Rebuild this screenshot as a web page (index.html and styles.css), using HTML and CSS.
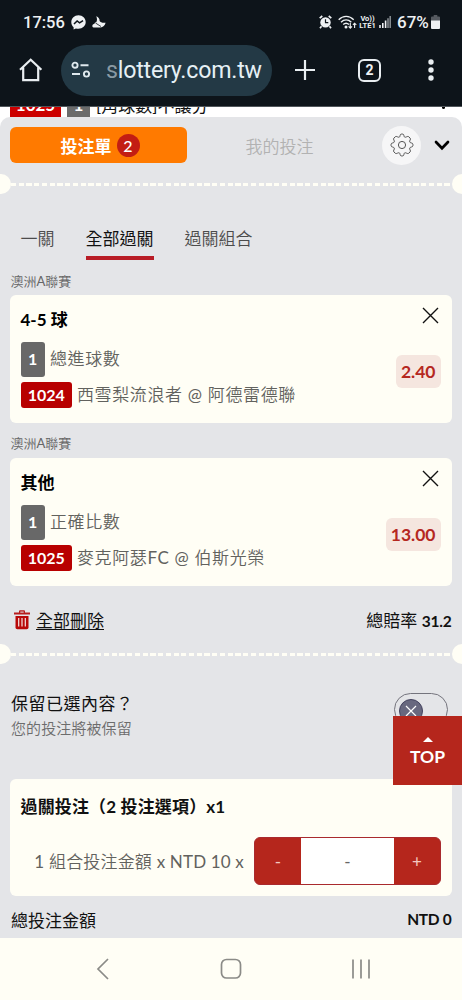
FILE: index.html
```html
<!DOCTYPE html>
<html lang="zh-Hant">
<head>
<meta charset="utf-8">
<meta name="viewport" content="width=device-width, initial-scale=1">
<title>投注單</title>
<link rel="stylesheet" href="styles.css">
</head>
<body>
<div class="phone">
  <header class="browser">
    <div class="status">
      <div class="status-left">
        <span class="clock">17:56</span>
        <svg class="messenger" width="15" height="15" viewBox="0 0 15 15"><path fill="#eef1f3" d="M7.5.3C3.4.3.3 3.3.3 7.2c0 2.1.9 3.8 2.3 5v2.3l2.3-1.1c.8.3 1.7.4 2.6.4 4.1 0 7.2-2.9 7.2-6.7S11.600.3 7.500.3Z"/><path d="m3 9 3.100-3.100 2.500 2L12 5.600" fill="none" stroke="#0d141a" stroke-width="1.500"/></svg>
        <svg class="moon" width="14" height="14" viewBox="0 0 14 14"><path fill="#eef1f3" d="M4.200 1.200c2.400.8 3.600 2.700 3.400 4.800.9 1.600 3 2 6 1.700-.6 3-3 4.800-6 4.800H1.600C.5 12.500.2 11.500.4 10.600c.2-1 1-1.500 1.900-1.500.2-1.200 1-1.800 2-1.800 1-2 .9-4.300-.1-6.100Z"/><path d="m3.500 8 5.500 3.500" stroke="#0d141a" stroke-width=".8"/></svg>
      </div>
      <div class="status-right">
        <svg width="13" height="14" viewBox="0 0 13 14"><circle cx="6.500" cy="7.400" r="5.200" fill="#eef1f3"/><path d="M.7 3.200 3.300 1M12.300 3.200 9.700 1M2.500 11.300 1 13.200M10.500 11.300l1.500 1.900" stroke="#eef1f3" stroke-width="1.700"/><path d="M6.500 4.200v3.400h2.800" stroke="#0d141a" stroke-width="1.200" fill="none"/></svg>
        <svg class="wifi" width="19" height="15" viewBox="0 0 19 15"><g fill="none" stroke="#eef1f3" stroke-width="1.400"><path d="M.7 4.700c4.300-4.500 10.600-4.500 15 0M3 7.200c3-3 7.200-3 10.300 0M5.200 9.600c1.700-1.700 4-1.700 5.800 0"/><path d="M12.300 8v5m-1.700-1.700 1.700 1.800 1.700-1.800M16.600 13V8.300m-1.700 1.600 1.700-1.700 1.700 1.700" stroke-width="1.100"/></g><circle cx="8" cy="12" r="1.500" fill="#eef1f3"/></svg>
        <span class="lte"><span>Vo))</span><span>LTE1</span></span>
        <svg class="signal" width="12" height="12" viewBox="0 0 12 12"><path d="M1 12V9M3.800 12V7M6.600 12V4.500" stroke="#eef1f3" stroke-width="1.600"/><path d="M9 12V2.200M11.200 12V0" stroke="#8b9196" stroke-width="1.500"/></svg>
        <span class="pct">67%</span>
        <svg width="9" height="14" viewBox="0 0 9 14"><path d="M2.700 0h3.600v1.500H8A1 1 0 0 1 9 2.500V6H0V2.500a1 1 0 0 1 1-1h1.700Z" fill="#555a60"/><path d="M0 5.500h9V13a1 1 0 0 1-1 1H1a1 1 0 0 1-1-1Z" fill="#eef1f3"/></svg>
      </div>
    </div>
    <div class="toolbar">
      <svg class="home" width="24" height="24" viewBox="0 0 24 24"><path d="M1 11.700 11.700 1.700 22.400 11.700M4.200 9.500v12.700h15V9.500" fill="none" stroke="#e9eef1" stroke-width="2.200"/></svg>
      <div class="address">
        <svg width="20" height="18" viewBox="0 0 20 18" fill="none" stroke="#dfe9ee" stroke-width="1.900"><circle cx="4" cy="4.200" r="2.600"/><path d="M9.500 4.200h8M1 13h8"/><circle cx="15.500" cy="13" r="2.600"/></svg>
        <span class="url"><span class="fade">s</span>lottery.com.tw</span>
      </div>
      <svg class="plus" width="22" height="22" viewBox="0 0 22 22"><path d="M11 1v20M1 11h20" stroke="#e9eef1" stroke-width="2.200"/></svg>
      <span class="count">2</span>
      <svg class="dots" width="6" height="22" viewBox="0 0 6 22" fill="#e9eef1"><circle cx="3" cy="3" r="2.700"/><circle cx="3" cy="11" r="2.700"/><circle cx="3" cy="19" r="2.700"/></svg>
    </div>
  </header>

  <div class="peek">
    <div class="peek-row"><span class="peek-id">1025</span><span class="peek-num">1</span><span class="peek-text">[角球數]不讓分</span><span class="peek-dot"></span></div>
  </div>

  <main class="sheet">
    <div class="sheet-head">
      <div class="slip">投注單<span class="badge">2</span></div>
      <div class="mine">我的投注</div>
      <div class="gear"><svg width="24" height="24" viewBox="-12 -12 24 24" fill="none" stroke="#555" stroke-width="1" stroke-linejoin="round"><circle r="3.600"/><path d="M-2.600-7.900C-1.600-8.600-2.200-10.900-.8-10.900H.8C2.200-10.900 1.600-8.600 2.600-7.900 3.900-7.200 5.500-9.300 6.700-8.300L8.100-6.900C9.300-5.800 7.200-4.400 7.700-3.100 8-1.700 10.900-2.400 10.900-.8V.8C10.900 2.400 8 1.700 7.700 3.100 7.200 4.400 9.300 5.800 8.100 6.900L6.700 8.300C5.500 9.300 3.900 7.200 2.600 7.900 1.600 8.600 2.200 10.900.8 10.900H-.8C-2.200 10.900-1.600 8.600-2.600 7.900-3.900 7.200-5.500 9.300-6.700 8.300L-8.100 6.900C-9.300 5.800-7.200 4.400-7.700 3.100-8 1.700-10.900 2.400-10.900.8V-.8C-10.900-2.400-8-1.700-7.700-3.100-7.200-4.400-9.300-5.800-8.100-6.900L-6.700-8.300C-5.500-9.300-3.900-7.200-2.600-7.900Z"/></svg></div>
      <svg class="chev" width="16" height="11" viewBox="0 0 16 11"><path d="m2 2 6 6.300L14 2" fill="none" stroke="#000" stroke-width="2.700" stroke-linecap="round"/></svg>
    </div>
    <div class="perforation"><span></span></div>

    <nav class="tabs"><span>一關</span><span class="active">全部過關</span><span>過關組合</span></nav>

    <div class="league">澳洲<span class="latin">A</span>聯賽</div>
    <section class="card bet">
      <div class="bet-title"><span>4-5 球</span><svg width="17" height="17" viewBox="0 0 17 17"><path d="m1 1 15 15M16 1 1 16" stroke="#111" stroke-width="1.400"/></svg></div>
      <div class="bet-body">
        <div class="lines">
          <div class="line"><span class="num">1</span><span>總進球數</span></div>
          <div class="line"><span class="id">1024</span><span>西雪梨流浪者 <span class="latin">@</span> 阿德雷德聯</span></div>
        </div>
        <span class="odds">2.40</span>
      </div>
    </section>

    <div class="league">澳洲<span class="latin">A</span>聯賽</div>
    <section class="card bet">
      <div class="bet-title"><span>其他</span><svg width="17" height="17" viewBox="0 0 17 17"><path d="m1 1 15 15M16 1 1 16" stroke="#111" stroke-width="1.400"/></svg></div>
      <div class="bet-body">
        <div class="lines">
          <div class="line"><span class="num">1</span><span>正確比數</span></div>
          <div class="line"><span class="id">1025</span><span>麥克阿瑟<span class="latin">FC @</span> 伯斯光榮</span></div>
        </div>
        <span class="odds">13.00</span>
      </div>
    </section>

    <div class="summary">
      <svg width="16" height="20" viewBox="0 0 16 20"><path d="M0 2.500h5V1.200Q5 .2 6 .2h4q1 0 1 1v1.300h5v2H0Z" fill="#b71c1c"/><path d="M6.300 1.600h3.400v1H6.300Z" fill="#e3e4e6"/><path d="M1.500 6h13v11.500q0 1.800-1.800 1.800H3.300q-1.800 0-1.800-1.800Z" fill="#b80808"/><path d="M4.700 8v8.500M8 8v8.500M11.300 8v8.500" stroke="#f6e5e3" stroke-width="1.200"/></svg>
      <span class="delete">全部刪除</span>
      <span class="total-odds">總賠率 <b>31.2</b></span>
    </div>
    <div class="perforation"><span></span></div>

    <div class="keep">
      <div><div class="keep-title">保留已選內容？</div><div class="keep-sub">您的投注將被保留</div></div>
      <div class="toggle"><span class="knob"><svg width="12" height="12" viewBox="0 0 12 12"><path d="m1 1 10 10M11 1 1 11" stroke="#fff" stroke-width="1.200"/></svg></span></div>
    </div>

    <section class="card stake">
      <div class="stake-title">過關投注（2 投注選項）x1</div>
      <div class="stake-row">
        <span class="stake-text"><span class="latin">1</span> 組合投注金額 <span class="latin">x NTD 10 x</span></span>
        <div class="stepper"><span class="step">-</span><span class="value">-</span><span class="step">+</span></div>
      </div>
    </section>
    <div class="total"><span>總投注金額</span><b>NTD 0</b></div>
  </main>

  <div class="top-button"><span class="caret"></span><span>TOP</span></div>

  <footer class="android-nav">
    <svg width="14" height="22" viewBox="0 0 14 22"><path d="M12 1 2 11l10 10" fill="none" stroke="#8b8b87" stroke-width="1.700"/></svg>
    <svg width="22" height="22" viewBox="0 0 22 22"><rect x="1.500" y="1.500" width="19" height="18.500" rx="5" fill="none" stroke="#8b8b87" stroke-width="1.700"/></svg>
    <svg width="20" height="20" viewBox="0 0 20 20"><path d="M2 .5v19M10 .5v19M18 .5v19" stroke="#8b8b87" stroke-width="1.700"/></svg>
  </footer>
</div>
</body>
</html>
```
FILE: styles.css
```css
* { box-sizing: border-box; }
body { margin: 0; background: #fffef5; }
svg { display: block; flex: none; }
.phone {
  position: relative;
  display: flex;
  flex-direction: column;
  width: 462px;
  height: 1000px;
  overflow: hidden;
  font-family: Lato, "Noto Sans CJK TC", sans-serif;
  font-size: 17px;
  color: #111;
  white-space: nowrap;
}
.latin { font-weight: 400; }
.browser { flex: none; height: 107px; background: #0d141a; border-bottom: 1px solid #50565b; color: #eef1f3; font-family: Roboto, sans-serif; }
.status { display: flex; justify-content: space-between; align-items: center; height: 44px; padding: 0 22px 0 23px; }
.status-left, .status-right { display: flex; align-items: center; }
.clock { font-size: 16.500px; font-weight: 500; width: 42px; }
.messenger { margin-left: 6px; }
.moon { margin-left: 6px; }
.wifi { margin-left: 6px; }
.lte { display: flex; flex-direction: column; align-items: center; width: 17px; margin-left: 2px; font-size: 7.500px; line-height: 7px; font-weight: 700; }
.signal { margin-left: 3px; }
.pct { width: 34px; margin: 0 0 0 6px; font-size: 17px; font-weight: 500; }
.toolbar { display: flex; align-items: center; height: 52px; padding-left: 19px; }
.address { display: flex; align-items: center; flex: none; width: 211px; height: 51px; margin-left: 18px; padding-left: 10px; border-radius: 26px; background: #233945; }
.url { margin-left: 15px; font-size: 23.200px; letter-spacing: -.22px; color: #e6f0f5; }
.fade { color: #8a9aa3; }
.plus { margin-left: 22px; }
.count { display: flex; align-items: center; justify-content: center; width: 23px; height: 23px; margin-left: 42px; border: 2.500px solid #e9eef1; border-radius: 6px; font-size: 14px; font-weight: 700; }
.dots { margin-left: 47px; }

.peek { flex: none; height: 22px; margin-bottom: -12px; background: #fff; overflow: hidden; }
.peek-row { display: flex; align-items: center; height: 26px; margin-top: -16px; padding: 0 12px 0 10px; font-size: 17px; }
.peek-id, .peek-num { height: 25px; line-height: 25px; text-align: center; color: #fff; font-weight: 700; }
.peek-id { width: 51px; background: #c00; }
.peek-num { width: 23px; margin-left: 6px; background: #6b6b6b; }
.peek-text { margin-left: 6px; }
.peek-dot { width: 3px; height: 3px; margin: 7px 5px 0 auto; border-radius: 50%; background: #000; }

.sheet { flex: 1; min-height: 0; background: #e4e5e8; border-radius: 10px 10px 0 0; z-index: 1; }
.sheet-head { display: flex; align-items: center; height: 57px; padding: 0 12px 1px 10px; }
.slip { display: flex; align-items: center; justify-content: center; width: 177px; height: 36px; padding-left: 3px; border-radius: 6px; background: #ff7a00; color: #fff; font-weight: 700; }
.badge { width: 23px; height: 23px; margin-left: 5px; border-radius: 50%; background: #c31d13; font-size: 16px; line-height: 23px; text-align: center; font-weight: 500; }
.mine { flex: 1; text-align: center; color: #b2b2b2; font-weight: 350; padding-right: 10px; }
.gear { display: grid; place-items: center; width: 39px; height: 39px; border-radius: 50%; background: #f6f6f7; }
.chev { margin-left: 13px; }
.perforation { display: flex; align-items: center; justify-content: space-between; height: 20px; overflow: hidden; }
.perforation::before, .perforation::after { content: ""; flex: none; width: 20px; height: 20px; border-radius: 50%; background: #fffef5; }
.perforation::before { margin-left: -9.500px; }
.perforation::after { margin-right: -10px; }
.perforation span { flex: 1; height: 3px; background: repeating-linear-gradient(90deg, #fffef5 0 5.200px, transparent 5.200px 7.740px); }

.tabs { display: flex; gap: 31px; height: 66px; padding: 0 20.500px; align-items: flex-end; color: #4c4c4c; font-weight: 350; }
.tabs span { height: 34px; line-height: 26px; }
.tabs .active { color: #111; border-bottom: 4px solid #b81c26; font-weight: 400; }
.league { height: 35px; padding: 8px 10.500px 0; font-size: 13px; line-height: 26px; color: #666; font-weight: 350; }
.card { margin: 0 10.500px 0 10px; border-radius: 6px; background: #fffef5; }
.bet { height: 128px; padding: 12px 11px 0 10.500px; }
.bet + .league { height: 35px; padding-top: 7px; }
.bet-title { display: flex; justify-content: space-between; height: 35px; padding-right: 2px; line-height: 25px; font-weight: 700; color: #000; }
.bet-body { display: flex; justify-content: space-between; }
.lines { display: flex; flex-direction: column; gap: 5px; }
.line { display: flex; align-items: center; gap: 5px; color: #62625e; letter-spacing: .6px; font-weight: 350; line-height: 24px; height: 26px; padding-bottom: 1px; }
.line:first-child { height: 35px; }
.num, .id { display: flex; align-items: center; justify-content: center; border-radius: 3px; color: #fff; font-size: 16px; letter-spacing: 0; font-weight: 700; }
.num { width: 24.500px; height: 35px; background: #686868; }
.id { width: 51.500px; height: 26px; background: #b80000; }
.odds { height: 33px; margin-top: 13px; padding: 0 5px; border-radius: 6px; background: #f5e6df; color: #b5281f; font-size: 17.500px; line-height: 34px; font-weight: 700; }

.summary { display: flex; align-items: center; height: 58px; padding: 9px 10.500px 0 14px; }
.delete { margin-left: 6px; text-decoration: underline; text-underline-offset: 2px; text-decoration-thickness: 1px; }
.total-odds { margin-left: auto; }
.total-odds b { font-size: 15.500px; font-weight: 700; letter-spacing: -.2px; }

.keep { display: flex; justify-content: space-between; height: 115px; padding: 27px 14px 0 11px; }
.keep-title { font-size: 17px; line-height: 26px; letter-spacing: .5px; }
.keep-sub { font-size: 15px; line-height: 22px; letter-spacing: .1px; color: #6c6c6c; font-weight: 350; }
.toggle { width: 54px; height: 33px; margin-top: 2px; padding: 5px 4px; border: 1px solid #74747d; border-radius: 17px; }
.knob { display: grid; place-items: center; width: 24px; height: 24px; border: 1px solid #44435f; border-radius: 50%; background: #68687f; }
.stake { height: 117px; padding: 15px 10.500px 0; }
.stake-title { height: 43px; line-height: 26px; font-weight: 700; letter-spacing: .15px; color: #111; }
.stake-row { display: flex; align-items: center; justify-content: flex-end; }
.stake-text { margin: 0 10px 2px 0; color: #62625e; font-weight: 350; letter-spacing: .16px; }
.stepper { display: flex; width: 187px; height: 48px; border: 1px solid #a92a2e; border-radius: 6px; background: #b5261c; overflow: hidden; }
.step { flex: 1; line-height: 47px; text-align: center; color: #f4c8c1; }
.value { width: 93px; line-height: 47px; text-align: center; background: #fff; color: #666; }
.total { display: flex; justify-content: space-between; align-items: center; height: 46px; padding: 0 10.500px 0 11px; }
.total b { font-size: 15.500px; font-weight: 700; letter-spacing: -.3px; }

.top-button { position: absolute; right: 0; top: 716px; z-index: 2; display: flex; flex-direction: column; align-items: center; width: 69px; height: 69px; padding-top: 21px; background: #b5261c; color: #fff; font-size: 17.500px; line-height: 29px; font-weight: 700; }
.caret { border: 5px solid transparent; border-top: 0; border-bottom: 5px solid #fff; }
.android-nav { display: flex; align-items: center; justify-content: space-between; flex: none; height: 62px; padding: 0 91px 0 96px; background: #fffef5; }
```
